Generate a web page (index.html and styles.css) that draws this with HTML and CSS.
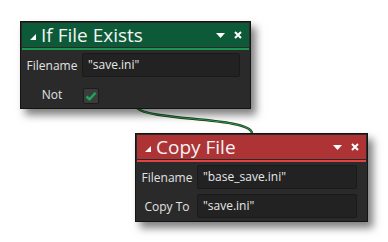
FILE: index.html
```html
<!DOCTYPE html>
<html lang="en">

<head>
  <meta charset="UTF-8">
  <title>Actions</title>
  <link rel="stylesheet" href="styles.css">
</head>

<body>
  <div class="canvas">
    <!-- link between the two action nodes -->
    <svg class="link" width="388" height="242" viewBox="0 0 388 242">
      <path d="M137 108 C 150 121, 250 117, 252 133" fill="none" stroke="#1c3a22" stroke-width="2.4" />
      <path d="M137 108 C 150 121, 250 117, 252 133" fill="none" stroke="#2f9a45" stroke-width="1.1" />
    </svg>

    <div class="node node-exists">
      <div class="node-head green">
        <svg class="fold" width="6" height="6" viewBox="0 0 6 6"><path d="M6 0 L6 6 L0 6 Z" fill="#fff" /></svg>
        <span class="node-title">If File Exists</span>
        <svg class="menu" width="9" height="5" viewBox="0 0 9 5"><path d="M0 0 H9 L4.5 5 Z" fill="#fff" /></svg>
        <svg class="close" width="8" height="8" viewBox="0 0 8 8"><path d="M1 1 L7 7 M7 1 L1 7" stroke="#fff" stroke-width="2" /></svg>
      </div>
      <div class="stripe green-line"></div>
      <div class="node-body">
        <div class="row">
          <span class="label">Filename</span>
          <div class="field">"save.ini"</div>
        </div>
        <div class="row">
          <span class="label">Not</span>
          <div class="check">
            <svg width="12" height="10" viewBox="0 0 12 10"><path d="M1.5 5.5 L4.5 8.2 L10.5 1.8" fill="none" stroke="#1fa75c" stroke-width="2.4" /></svg>
          </div>
        </div>
      </div>
    </div>

    <div class="node node-copy">
      <div class="node-head red">
        <svg class="fold" width="6" height="6" viewBox="0 0 6 6"><path d="M6 0 L6 6 L0 6 Z" fill="#fff" /></svg>
        <span class="node-title">Copy File</span>
        <svg class="menu" width="9" height="5" viewBox="0 0 9 5"><path d="M0 0 H9 L4.5 5 Z" fill="#fff" /></svg>
        <svg class="close" width="8" height="8" viewBox="0 0 8 8"><path d="M1 1 L7 7 M7 1 L1 7" stroke="#fff" stroke-width="2" /></svg>
      </div>
      <div class="stripe red-line"></div>
      <div class="node-body">
        <div class="row">
          <span class="label">Filename</span>
          <div class="field">"base_save.ini"</div>
        </div>
        <div class="row">
          <span class="label">Copy To</span>
          <div class="field">"save.ini"</div>
        </div>
      </div>
    </div>
  </div>
</body>

</html>
```

FILE: styles.css
```css
html,
body {
  margin: 0;
  padding: 0;
  background: #fff;
  font-family: "Open Sans", "Noto Sans", sans-serif;
}

.canvas {
  position: relative;
  width: 388px;
  height: 242px;
  overflow: hidden;
}

.link {
  position: absolute;
  left: 0;
  top: 0;
}

/* action nodes sit on a free canvas */
.node {
  position: absolute;
  box-sizing: border-box;
  background: #2a2a2a;
  border: 1px solid #141414;
  box-shadow: 5px 6px 8px rgba(0, 0, 0, 0.5);
  padding: 1px;
}

.node-exists {
  left: 20px;
  top: 21px;
  width: 231px;
  height: 88px;
}

.node-copy {
  left: 135px;
  top: 133px;
  width: 233px;
  height: 89px;
}

.node-head {
  display: flex;
  align-items: center;
  height: 24px;
  padding: 0 7px 0 8px;
  color: #fff;
}

.green {
  background: #0c5a37;
}

.red {
  background: #ad3334;
}

.fold {
  margin-top: 4px;
  margin-right: 5px;
}

.node-title {
  flex: 1;
  font-size: 19px;
  font-weight: 400;
  line-height: 24px;
  color: #f4f4f4;
}

.menu {
  margin-right: 9px;
}

.stripe {
  height: 2px;
  margin-top: 1px;
}

.green-line {
  background: #1c9552;
}

.red-line {
  background: #e04343;
}

.node-body {
  display: flex;
  flex-direction: column;
  gap: 5px;
  padding: 3px 9px 0 0;
}

.row {
  display: flex;
  align-items: center;
  height: 24px;
}

.label {
  width: 60px;
  text-align: center;
  font-size: 12px;
  color: #e2e2e2;
}

.field {
  flex: 1;
  box-sizing: border-box;
  height: 24px;
  line-height: 22px;
  padding: 0 5px;
  background: #222;
  border: 1px solid #1a1a1a;
  border-radius: 2px;
  font-size: 12px;
  color: #e8e8e8;
}

.check {
  box-sizing: border-box;
  width: 16px;
  height: 16px;
  margin-left: 1px;
  margin-top: 3px;
  background: #3b3d3c;
  border: 1px solid #1c1c1c;
  border-radius: 2px;
  display: flex;
  align-items: center;
  justify-content: center;
}
```
